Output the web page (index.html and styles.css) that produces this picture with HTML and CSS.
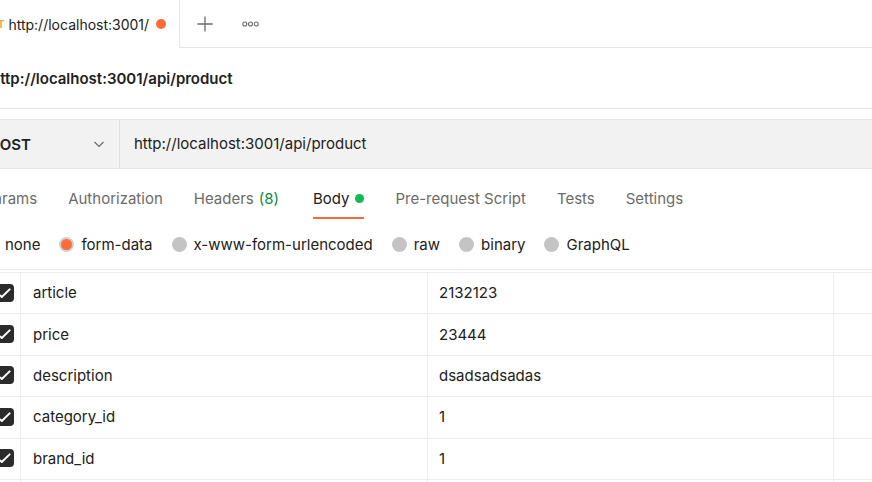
FILE: index.html
```html
<!DOCTYPE html>
<html>
<head>
<meta charset="utf-8">
<link rel="stylesheet" href="styles.css">
</head>
<body>
<div class="tabbar">
  <div class="tab">
    <span class="tab-method">POST</span>
    <span class="tab-url">http://localhost:3001/</span>
    <span class="tab-dot"></span>
  </div>
  <div class="tabbar-rest">
    <span class="icon-btn">
      <svg width="16" height="16" viewBox="0 0 16 16"><path d="M8 0.5v15M0.5 8h15" stroke="#6b6b6b" stroke-width="1.3" fill="none"/></svg>
    </span>
    <span class="icon-btn">
      <svg width="17" height="8" viewBox="0 0 17 8"><circle cx="2.8" cy="4" r="2" stroke="#6b6b6b" stroke-width="1.1" fill="none"/><circle cx="8.5" cy="4" r="2" stroke="#6b6b6b" stroke-width="1.1" fill="none"/><circle cx="14.2" cy="4" r="2" stroke="#6b6b6b" stroke-width="1.1" fill="none"/></svg>
    </span>
  </div>
</div>
<div class="title-row"><span class="title">http://localhost:3001/api/product</span></div>
<div class="request-bar">
  <div class="method">
    <span class="method-text">POST</span>
    <svg class="chevron" width="12" height="12" viewBox="0 0 12 12"><path d="M1.5 4l4.5 4.5 4.5-4.5" stroke="#6b6b6b" stroke-width="1.2" fill="none"/></svg>
  </div>
  <div class="url">http://localhost:3001/api/product</div>
</div>
<div class="req-tabs">
  <span class="req-tab">Params</span>
  <span class="req-tab">Authorization</span>
  <span class="req-tab">Headers <span class="count">(8)</span></span>
  <span class="req-tab active">Body <span class="green-dot"></span></span>
  <span class="req-tab">Pre-request Script</span>
  <span class="req-tab">Tests</span>
  <span class="req-tab">Settings</span>
</div>
<div class="body-types">
  <label class="opt"><span class="radio"></span>none</label>
  <label class="opt"><span class="radio selected"></span>form-data</label>
  <label class="opt"><span class="radio"></span>x-www-form-urlencoded</label>
  <label class="opt"><span class="radio"></span>raw</label>
  <label class="opt"><span class="radio"></span>binary</label>
  <label class="opt"><span class="radio"></span>GraphQL</label>
</div>
<div class="table">
  <div class="row">
    <div class="cell check"><span class="checkbox"><svg width="12" height="12" viewBox="0 0 12 12"><path d="M1.4 8.6L2.8 10L10.6 2.4" stroke="#fff" stroke-width="2" fill="none" stroke-linecap="round" stroke-linejoin="round"/></svg></span></div>
    <div class="cell key">article</div>
    <div class="cell val">2132123</div>
    <div class="cell rest"></div>
  </div>
  <div class="row">
    <div class="cell check"><span class="checkbox"><svg width="12" height="12" viewBox="0 0 12 12"><path d="M1.4 8.6L2.8 10L10.6 2.4" stroke="#fff" stroke-width="2" fill="none" stroke-linecap="round" stroke-linejoin="round"/></svg></span></div>
    <div class="cell key">price</div>
    <div class="cell val">23444</div>
    <div class="cell rest"></div>
  </div>
  <div class="row">
    <div class="cell check"><span class="checkbox"><svg width="12" height="12" viewBox="0 0 12 12"><path d="M1.4 8.6L2.8 10L10.6 2.4" stroke="#fff" stroke-width="2" fill="none" stroke-linecap="round" stroke-linejoin="round"/></svg></span></div>
    <div class="cell key">description</div>
    <div class="cell val">dsadsadsadas</div>
    <div class="cell rest"></div>
  </div>
  <div class="row">
    <div class="cell check"><span class="checkbox"><svg width="12" height="12" viewBox="0 0 12 12"><path d="M1.4 8.6L2.8 10L10.6 2.4" stroke="#fff" stroke-width="2" fill="none" stroke-linecap="round" stroke-linejoin="round"/></svg></span></div>
    <div class="cell key">category_id</div>
    <div class="cell val">1</div>
    <div class="cell rest"></div>
  </div>
  <div class="row">
    <div class="cell check"><span class="checkbox"><svg width="12" height="12" viewBox="0 0 12 12"><path d="M1.4 8.6L2.8 10L10.6 2.4" stroke="#fff" stroke-width="2" fill="none" stroke-linecap="round" stroke-linejoin="round"/></svg></span></div>
    <div class="cell key">brand_id</div>
    <div class="cell val">1</div>
    <div class="cell rest"></div>
  </div>
  <div class="row">
    <div class="cell check"></div>
    <div class="cell key"></div>
    <div class="cell val"></div>
    <div class="cell rest"></div>
  </div>
</div>
</body>
</html>
```
FILE: styles.css
```css
* { box-sizing: border-box; }
html, body { margin: 0; padding: 0; background: #fff; overflow: hidden; }
body {
  font-family: Inter, "Noto Sans", sans-serif;
  font-size: 15px;
  color: #212121;
  width: 872px;
  height: 482px;
}

.tabbar { display: flex; height: 48px; }
.tab {
  display: flex;
  align-items: center;
  margin-left: -30px;
  width: 210px;
  padding-left: 7px;
  border-right: 1px solid #e6e6e6;
}
.tab-method { font-size: 10px; font-weight: 700; color: #f2a43a; margin-right: 4px; }
.tab-url { font-size: 14px; color: #212121; }
.tab-dot { width: 10px; height: 10px; border-radius: 50%; background: #ff6c37; margin-left: 7px; }
.tabbar-rest {
  flex: 1;
  display: flex;
  align-items: center;
  gap: 29px;
  padding-left: 17px;
  border-bottom: 1px solid #e6e6e6;
}
.icon-btn { display: flex; align-items: center; }

.title-row {
  height: 61px;
  display: flex;
  align-items: center;
  border-bottom: 1px solid #e6e6e6;
  margin-left: -9px;
}
.title { font-weight: 600; }

.request-bar {
  margin-top: 10px;
  height: 50px;
  display: flex;
  background: #f2f2f2;
  border-top: 1px solid #e6e6e6;
  border-bottom: 1px solid #e6e6e6;
}
.method {
  width: 130px;
  margin-left: -10px;
  display: flex;
  align-items: center;
  justify-content: space-between;
  padding-right: 14px;
  border-right: 1px solid #e0e0e0;
}
.method-text { font-weight: 600; }
.url { display: flex; align-items: center; padding-left: 14px; padding-bottom: 1px; }

.req-tabs {
  display: flex;
  height: 50px;
  gap: 31px;
  margin-left: -16px;
}
.req-tab {
  display: flex;
  align-items: center;
  color: #6b6b6b;
  padding-top: 10px;
  border-bottom: 2px solid transparent;
}
.req-tab .count { color: #0a8a3f; margin-left: 5px; }
.req-tab.active { color: #212121; border-bottom-color: #f26b3a; margin-left: 3px; }
.green-dot { width: 9px; height: 9px; border-radius: 50%; background: #0cbb52; margin-left: 6px; }

.body-types {
  display: flex;
  height: 51px;
  align-items: center;
  gap: 19px;
  margin-left: -17px;
  border-bottom: 1px solid #ededed;
}
.opt { display: flex; align-items: center; gap: 7px; }
.radio { width: 15px; height: 15px; border-radius: 50%; background: #c4c4c4; display: inline-block; }
.radio.selected { background: #ff6c37; border: 2px solid #cfcfcf; }

.table { margin-top: 2px; margin-left: -16px; border-top: 1px solid #ededed; }
.row {
  display: grid;
  grid-template-columns: 37px 407px 406px 1fr;
  height: 41.4px;
  border-bottom: 1px solid #ededed;
}
.cell { display: flex; align-items: center; border-right: 1px solid #ededed; padding-bottom: 1px; }
.cell.rest { border-right: none; }
.check { padding-left: 12px; }
.checkbox {
  width: 18px; height: 18px; border-radius: 4px; background: #2b2b2b;
  display: flex; align-items: center; justify-content: center;
}
.key { padding-left: 12px; }
.val { padding-left: 11px; }
```
